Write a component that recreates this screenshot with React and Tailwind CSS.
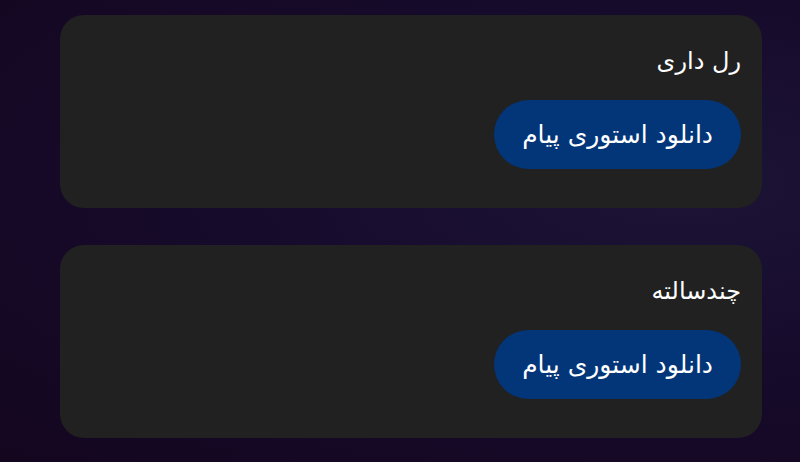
import React from 'react';

const items = ['رل داری', 'چندسالته'];

const StoryCard = ({ title }) => (
    <div className="w-[702px] h-[193px] rounded-[24px] bg-[#212121] pt-[28px] pr-[21px] pl-[21px] flex flex-col items-start">
        <h3 className="text-[24px] leading-[36px] text-white font-normal">{title}</h3>
        <button className="mt-[21px] h-[69px] px-[28px] rounded-full bg-[#023679] text-white text-[25px] leading-none">
            دانلود استوری پیام
        </button>
    </div>
);

const App = () => {
    return (
        <div
            dir="rtl"
            className="w-[800px] h-[462px] overflow-hidden bg-[radial-gradient(ellipse_at_85%_40%,#1c1436_0%,#170b2c_45%,#14061f_100%)] flex flex-col items-start pr-[38px] pt-[15px] gap-[37px]"
            style={{ fontFamily: '"DejaVu Sans", "Noto Sans", sans-serif' }}
        >
            {items.map((t) => (
                <StoryCard key={t} title={t} />
            ))}
        </div>
    );
};

export default App;
